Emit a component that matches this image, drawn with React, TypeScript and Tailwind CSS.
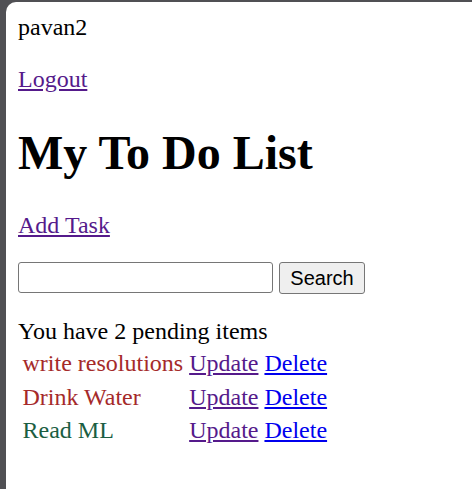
const todos = [
  { id: 1, title: "write resolutions", color: "text-[#a52a2a]" },
  { id: 2, title: "Drink Water", color: "text-[#a52a2a]" },
  { id: 3, title: "Read ML", color: "text-[#1b5e42]" },
];

export default function App() {
  return (
    <div className="h-screen w-full bg-[#505054] pl-[6px] pt-[2px]">
      <div className="h-full rounded-tl-[10px] bg-white p-[12px] font-['Liberation_Serif',serif] text-[24px] leading-[1.15] text-black">
        <div>pavan2</div>

        <p className="mt-[24px]">
          <a href="#" className="text-[#551a8b] underline">Logout</a>
        </p>

        <h1 className="mt-[32px] text-[48px] font-bold leading-[1.15]">My To Do List</h1>

        <p className="mt-[32px]">
          <a href="#" className="text-[#551a8b] underline">Add Task</a>
        </p>

        {/* search form */}
        <form className="mt-[22px] flex items-center gap-[6px]" onSubmit={(e) => e.preventDefault()}>
          <input
            type="text"
            className="h-[31px] w-[255px] rounded-[3px] border border-[#767676] bg-white px-[3px] text-[20px]"
          />
          <button
            type="submit"
            className="h-[32px] w-[86px] rounded-[3px] border border-[#767676] bg-[#efefef] font-['Liberation_Sans',Arial,sans-serif] text-[20px] leading-none text-black"
          >
            Search
          </button>
        </form>

        <div className="mt-[24px]">You have 2 pending items</div>

        <table className="border-separate border-spacing-[3px]">
          <tbody>
            {todos.map((t) => (
              <tr key={t.id}>
                <td className={`p-[1.5px] ${t.color}`}>{t.title}</td>
                <td className="p-[1.5px]">
                  <a href="#" className="text-[#551a8b] underline">Update</a>
                </td>
                <td className="p-[1.5px]">
                  <a href="#" className="text-[#0000ee] underline">Delete</a>
                </td>
              </tr>
            ))}
          </tbody>
        </table>
      </div>
    </div>
  );
}
